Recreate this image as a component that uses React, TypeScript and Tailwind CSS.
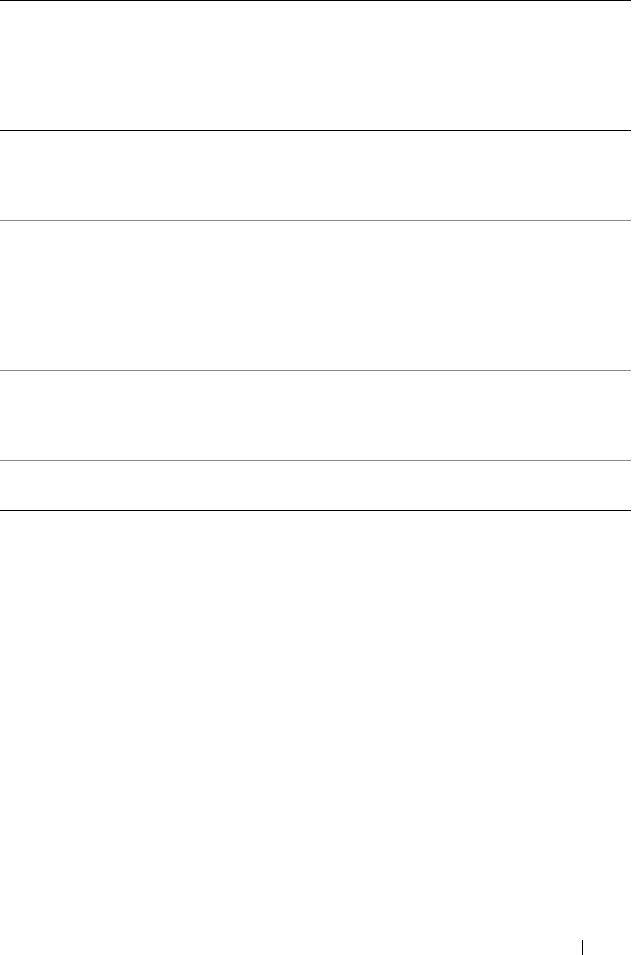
import React from 'react';

const rows = [
  { h: 'h-[130px]', border: 'border-black' },
  { h: 'h-[90px]', border: 'border-black' },
  { h: 'h-[150px]', border: 'border-[#8a8a8a]' },
  { h: 'h-[90px]', border: 'border-[#8a8a8a]' },
  { h: 'h-[50px]', border: 'border-[#8a8a8a]' },
];

const App: React.FC = () => {
  return (
    <div className="w-[641px] h-[955px] bg-white flex flex-col overflow-hidden">
      {/* Table rows */}
      <div className="w-[631px] flex flex-col border-b border-black">
        {rows.map((r, i) => (
          <div key={i} className={`${r.h} border-t ${r.border}`} />
        ))}
      </div>

      {/* Footer page marker */}
      <div className="flex-1 flex items-end">
        <div className="ml-[582px] w-px h-[15px] bg-black" />
      </div>
    </div>
  );
};

export default App;
